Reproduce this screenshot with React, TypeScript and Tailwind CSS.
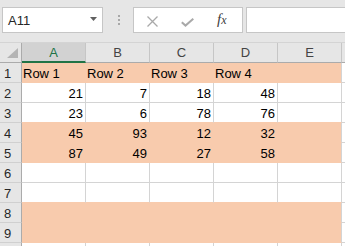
import React from "react";

type Row = { peach: boolean; text?: string[]; nums?: number[] };

const rows: Row[] = [
  { peach: true, text: ["Row 1", "Row 2", "Row 3", "Row 4"] },
  { peach: false, nums: [21, 7, 18, 48] },
  { peach: false, nums: [23, 6, 78, 76] },
  { peach: true, nums: [45, 93, 12, 32] },
  { peach: true, nums: [87, 49, 27, 58] },
  { peach: false },
  { peach: false },
  { peach: true },
  { peach: true },
  { peach: false },
];

const cols = ["A", "B", "C", "D", "E"];

function Toolbar() {
  return (
    <div className="h-[42px] bg-[#e6e6e6] flex items-start pt-[7px] pl-[2px]">
      <div className="relative w-[101px] h-[26px] shrink-0 bg-white border border-[#c6c6c6] flex items-center pl-[5px] pt-[1px] text-[13px] leading-[15px] text-[#262626]">
        A11
        <svg
          className="absolute right-[5px] top-[9px]"
          width="7"
          height="4"
          viewBox="0 0 7 4"
        >
          <polygon points="0,0 7,0 3.5,4" fill="#606060" />
        </svg>
      </div>
      <div className="ml-[15px] mt-[8px] flex flex-col gap-[2px] shrink-0">
        <div className="w-[2px] h-[2px] bg-[#a8a8a8]" />
        <div className="w-[2px] h-[2px] bg-[#a8a8a8]" />
        <div className="w-[2px] h-[2px] bg-[#a8a8a8]" />
      </div>
      <div className="ml-[13px] w-[110px] h-[26px] shrink-0 bg-white border border-[#c6c6c6] flex items-center">
        <svg className="ml-[13px] mt-[2px]" width="11" height="11" viewBox="0 0 11 11">
          <path d="M0.5 0.5 L10.5 10.5 M10.5 0.5 L0.5 10.5" stroke="#a9a9a9" strokeWidth="1.3" fill="none" />
        </svg>
        <svg className="ml-[23px] mt-[4px]" width="13" height="9" viewBox="0 0 13 9">
          <path d="M0.8 4.2 L4.5 7.6 L12.3 0.8" stroke="#a9a9a9" strokeWidth="2" fill="none" />
        </svg>
        <span className="ml-[23px] font-['Liberation_Serif',serif] italic text-[15px] leading-[15px] text-[#404040]">
          f<span className="text-[12px]">x</span>
        </span>
      </div>
      <div className="ml-[3px] w-[120px] h-[26px] shrink-0 bg-white border border-[#c6c6c6]" />
    </div>
  );
}

function HeaderRow() {
  return (
    <div className="flex h-[21px] bg-[#e6e6e6] border-t border-[#d4d4d4]">
      <div className="relative w-[22px] h-[20px] shrink-0 border-r border-b border-[#ababab]">
        <svg className="absolute left-[7px] top-[5px]" width="11" height="10" viewBox="0 0 11 10">
          <polygon points="11,0 11,10 0,10" fill="#b4b4b4" />
        </svg>
      </div>
      {cols.map((c) =>
        c === "A" ? (
          <div
            key={c}
            className="w-[64px] h-[20px] shrink-0 bg-[#d2d2d2] border-r border-r-[#c6c6c6] border-b-2 border-b-[#217346] flex items-center justify-center text-[13px] leading-[15px] text-[#217346]"
          >
            {c}
          </div>
        ) : (
          <div
            key={c}
            className="w-[64px] h-[20px] shrink-0 border-r border-r-[#c6c6c6] border-b border-b-[#ababab] flex items-center justify-center text-[13px] leading-[15px] text-[#444444]"
          >
            {c}
          </div>
        )
      )}
      <div className="w-[64px] h-[20px] shrink-0 border-b border-b-[#ababab]" />
    </div>
  );
}

function DataRow({ row, idx }: { row: Row; idx: number }) {
  const next = rows[idx + 1];
  const nextPeach = next ? next.peach : false;
  return (
    <div className="flex h-[20px]">
      <div className="w-[22px] h-[20px] shrink-0 bg-[#e6e6e6] border-r border-r-[#ababab] border-b border-b-[#d0d0d0] flex items-end pb-[1px] pl-[4px] text-[13px] leading-[15px] text-[#262626]">
        {idx + 1}
      </div>
      {cols.map((c, ci) => {
        const isE = ci === 4;
        const content = row.text ? row.text[ci] : row.nums ? row.nums[ci] : undefined;
        const isNum = !row.text;
        let cls =
          "w-[64px] h-[20px] shrink-0 border-r border-b flex items-end pb-[1px] text-[13px] leading-[15px] text-black ";
        if (row.peach) {
          cls += "bg-[#f8cbad] border-b-[#f8cbad] ";
          cls += isE ? "border-r-[#d4d4d4] " : "border-r-[#f8cbad] ";
        } else {
          cls += "bg-white border-r-[#d4d4d4] ";
          cls += nextPeach ? "border-b-[#f8cbad] " : "border-b-[#d4d4d4] ";
        }
        cls += isNum ? "justify-end pr-[2px]" : "justify-start pl-[1px]";
        return (
          <div key={c} className={cls}>
            {content !== undefined ? content : ""}
          </div>
        );
      })}
      <div className="w-[64px] h-[20px] shrink-0 bg-white border-b border-b-[#d4d4d4]" />
    </div>
  );
}

export default function App() {
  return (
    <div className="w-[345px] h-[246px] overflow-hidden bg-white font-['Liberation_Sans',sans-serif]">
      <Toolbar />
      <HeaderRow />
      {rows.map((r, i) => (
        <DataRow key={i} row={r} idx={i} />
      ))}
    </div>
  );
}
